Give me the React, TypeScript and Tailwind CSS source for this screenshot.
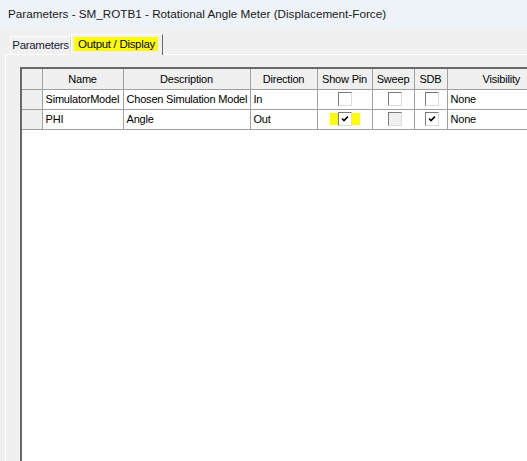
import React from 'react';

type Row = {
  name: string;
  description: string;
  direction: string;
  showPin: boolean;
  sweepDisabled: boolean;
  sdb: boolean;
  visibility: string;
  highlightPin?: boolean;
};

const rows: Row[] = [
  { name: 'SimulatorModel', description: 'Chosen Simulation Model', direction: 'In', showPin: false, sweepDisabled: false, sdb: false, visibility: 'None' },
  { name: 'PHI', description: 'Angle', direction: 'Out', showPin: true, sweepDisabled: true, sdb: true, visibility: 'None', highlightPin: true },
];

function CheckBox({ checked, disabled }: { checked: boolean; disabled?: boolean }) {
  return (
    <span
      className={`relative block w-[14px] h-[14px] border border-t-[#7a7a7a] border-l-[#7a7a7a] border-r-[#dcdcdc] border-b-[#dcdcdc] ${
        disabled ? 'bg-[#f0f0f0]' : 'bg-white'
      }`}
    >
      {checked && (
        <svg viewBox="0 0 12 12" className="absolute left-[1px] top-[1px] w-[10px] h-[10px]">
          <path d="M2.5 5.5 L4.8 8 L9.5 3.2" fill="none" stroke="#000" strokeWidth="1.9" />
        </svg>
      )}
    </span>
  );
}

const th = 'h-[20px] p-0 bg-[#f0f0f0] border border-[#a0a0a0] font-normal text-center whitespace-nowrap overflow-hidden';
const td = 'h-[20px] p-0 pl-[3px] bg-white border border-[#a0a0a0] whitespace-nowrap overflow-hidden text-left';

export default function App() {
  return (
    <div
      className="w-[527px] h-[461px] overflow-hidden bg-[#f0f0f0] text-black flex flex-col"
      style={{ fontFamily: '"Liberation Sans", Arial, sans-serif' }}
    >
      {/* Title bar */}
      <div className="h-[27px] shrink-0 bg-[#eef3f9] flex items-center pl-[8px] text-[11.7px] text-[#1a1a1a]">
        Parameters - SM_ROTB1 - Rotational Angle Meter (Displacement-Force)
      </div>

      {/* Tabs */}
      <div className="flex items-end pl-[10px] pt-[7px] h-[27px] shrink-0 text-[11.5px] tracking-[-0.3px] whitespace-nowrap">
        <div className="h-[18px] w-[61px] border-t border-l border-white border-r border-r-[#d8d8d8] flex items-center justify-center text-[#1a1a3a]">
          Parameters
        </div>
        <div className="h-[21px] w-[92px] -mb-[1px] bg-[#f0f0f0] border-t border-l border-white border-r border-r-[#696969] flex items-start pt-[2px] pl-[2px] relative z-10">
          <span className="bg-[#ffff00] pl-[4px] h-[14px] leading-[14px] w-[84px]">Output / Display</span>
        </div>
      </div>

      {/* Panel */}
      <div className="flex-1 ml-[5px] border-t border-l border-white pl-[14px] pt-[12px]">
        <div className="h-full border-t-2 border-l-2 border-[#696969] bg-white overflow-hidden">
          <table className="border-collapse text-[11px] tracking-[-0.2px] table-fixed w-[640px]">
            <colgroup>
              <col className="w-[20px]" />
              <col className="w-[81px]" />
              <col className="w-[127px]" />
              <col className="w-[67px]" />
              <col className="w-[55px]" />
              <col className="w-[42px]" />
              <col className="w-[33px]" />
              <col className="w-[215px]" />
            </colgroup>
            <thead>
              <tr>
                <th className={`${th} border-t-0 border-l-0`}></th>
                <th className={`${th} border-t-0`}>Name</th>
                <th className={`${th} border-t-0`}>Description</th>
                <th className={`${th} border-t-0`}>Direction</th>
                <th className={`${th} border-t-0`}>Show Pin</th>
                <th className={`${th} border-t-0`}>Sweep</th>
                <th className={`${th} border-t-0`}>SDB</th>
                <th className={`${th} border-t-0 text-left pl-[35px]`}>Visibility</th>
              </tr>
            </thead>
            <tbody>
              {rows.map((r) => (
                <tr key={r.name}>
                  <td className={`${th} border-l-0`}></td>
                  <td className={td}>{r.name}</td>
                  <td className={td}>{r.description}</td>
                  <td className={td}>{r.direction}</td>
                  <td className={`${td} pl-0`}>
                    <div className="flex justify-center pr-[2px]">
                      <span className={`flex items-center justify-center ${r.highlightPin ? 'bg-[#ffff00] w-[30px] h-[12px]' : ''}`}>
                        <CheckBox checked={r.showPin} />
                      </span>
                    </div>
                  </td>
                  <td className={`${td} pl-0`}>
                    <div className="flex justify-center">
                      <CheckBox checked={false} disabled={r.sweepDisabled} />
                    </div>
                  </td>
                  <td className={`${td} pl-0`}>
                    <div className="flex justify-center">
                      <CheckBox checked={r.sdb} />
                    </div>
                  </td>
                  <td className={td}>{r.visibility}</td>
                </tr>
              ))}
            </tbody>
          </table>
        </div>
      </div>
    </div>
  );
}
